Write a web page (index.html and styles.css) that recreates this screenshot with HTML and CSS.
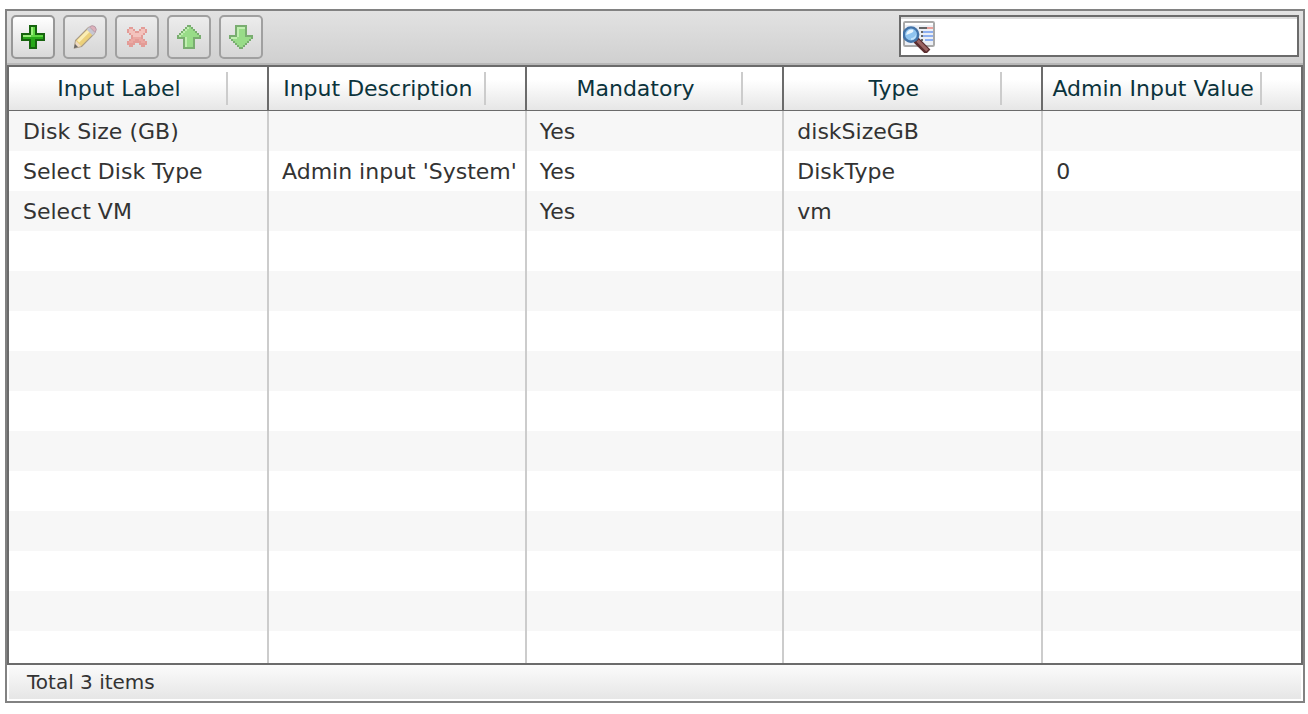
FILE: index.html
```html
<!DOCTYPE html>
<html lang="en">
<head>
<meta charset="utf-8">
<title>Inputs</title>
<link rel="stylesheet" href="styles.css">
</head>
<body>
<main class="panel">
  <div class="toolbar">
    <button class="tool" type="button" aria-label="Add">
      <svg class="icon" viewBox="0 0 12 12" shape-rendering="crispEdges">
        <path fill="#17640f" d="M4 0h4v4h4v4h-4v4h-4v-4h-4v-4h4z"/>
        <path fill="#27a818" d="M5 1h2v4h4v2h-4v4h-2v-4h-4v-2h4z"/>
        <path fill="#9bee7c" d="M5 1h1v4h-1zM1 5h4v1h-4z"/>
        <path fill="#5ed441" d="M6 1h1v4h-1zM7 5h4v1h-4zM5 5h2v1h-2z"/>
      </svg>
    </button>
    <button class="tool" type="button" aria-label="Edit" disabled>
      <svg class="icon" viewBox="0 0 12 12">
        <path fill="#ecd07a" stroke="#a89a86" stroke-width=".6" d="M1.300 7.700 7.700 1.300l3 3-6.400 6.400-3.600.8z"/>
        <path fill="#faedb5" d="m2 7.600 5.200-5.200 1.100 1.100-5.200 5.200z"/>
        <path fill="#c6c6d2" d="m6.800 2.200 1.200-1.200 3 3-1.200 1.200z"/>
        <path fill="#deb0ba" stroke="#b59aa6" stroke-width=".5" d="M8.200.9q1.400-1.100 2.800-.1 1.200 1.300.1 3z"/>
        <path fill="#eed9c2" d="m1.400 7.900 2.700 2.700-3 .7z"/>
        <path fill="#666" d="m1 9.500 1.500 1.500-2 .6z"/>
      </svg>
    </button>
    <button class="tool" type="button" aria-label="Delete" disabled>
      <svg class="icon" viewBox="0 0 12 12" shape-rendering="crispEdges">
        <path fill="#e39c97" d="M2 1h2v1h1v1h2v-1h1v-1h2v1h1v2h-1v1h-1v2h1v1h1v2h-1v1h-2v-1h-1v-1h-2v1h-1v1h-2v-1h-1v-2h1v-1h1v-2h-1v-1h-1v-2h1z"/>
        <path fill="#f3c3bd" d="M2 2h2v1h1v1h2v-1h1v-1h2v2h-1v1h-1v1h-4v-1h-1v-1h-1z"/>
        <path fill="#eba9a3" d="M4 6h4v1h1v1h1v1h-2v-1h-1v-1h-2v1h-1v1h-2v-1h1v-1h1z"/>
      </svg>
    </button>
    <button class="tool" type="button" aria-label="Move up" disabled>
      <svg class="icon" viewBox="0 0 12 12" shape-rendering="crispEdges">
        <path fill="#79ad70" d="M5 0h2v1h1v1h1v1h1v1h1v1h1v2h-3v5h-6v-5h-3v-2h1v-1h1v-1h1v-1h1v-1h1z"/>
        <path fill="#98dc88" d="M5 1h2v1h1v1h1v1h1v1h1v1h-3v5h-4v-5h-3v-1h1v-1h1v-1h1v-1h1z"/>
        <path fill="#c0efb0" d="M5 1h1v1h-1v1h-1v1h-1v1h-1v1h-1v-1h1v-1h1v-1h1v-1h1zM4 6h1v5h-1z"/>
      </svg>
    </button>
    <button class="tool" type="button" aria-label="Move down" disabled>
      <svg class="icon" viewBox="0 0 12 12" shape-rendering="crispEdges">
        <path fill="#79ad70" d="M3 0h6v5h3v2h-1v1h-1v1h-1v1h-1v1h-1v1h-2v-1h-1v-1h-1v-1h-1v-1h-1v-1h-1v-2h3z"/>
        <path fill="#98dc88" d="M4 1h4v5h3v1h-1v1h-1v1h-1v1h-1v1h-2v-1h-1v-1h-1v-1h-1v-1h-1v-1h3z"/>
        <path fill="#c0efb0" d="M4 1h4v1h-3v4h-1zM1 6h3v1h-3z"/>
      </svg>
    </button>
    <label class="search">
      <svg class="search-icon" viewBox="0 0 16 16">
        <rect x=".5" y=".5" width="15" height="12" rx=".6" fill="#eceff5" stroke="#a9a9a9"/>
        <path fill="#fff" d="M1 1h14v1h-14z"/>
        <path fill="#666" d="M8 3h4v1h-4zM9 5h1v1h-1zM9 7h1v1h-1zM9 9h1v1h-1z"/>
        <path fill="#e9a09b" d="M12 3h3v1h-3z"/>
        <path fill="#8eaff0" d="M10 5h5v1h-5zM10 7h5v1h-5zM11 9h4v1h-4z"/>
        <path stroke="#5b2d2f" stroke-width="3.400" d="m6.500 9.500 6 6"/>
        <path stroke="#9c6463" stroke-width="1.600" d="m7.300 9.800 4.900 4.900"/>
        <circle cx="4" cy="6.800" r="3.600" fill="#8fc4f0" stroke="#4373a8" stroke-width="1.200"/>
        <path fill="#e9f6ff" d="M1.600 7q0-2.800 3.200-2.800 1 .8-.4 1.700-1.600.6-2.800 1.100z"/>
        <path fill="#c4e4fb" d="M4 8.600q2-.2 2.400-2 .4 2.600-2.400 2.900z"/>
      </svg>
      <input class="search-input" type="text" aria-label="Search">
    </label>
  </div>
  <div class="grid">
    <table class="table">
      <colgroup><col class="col-first"><col><col><col class="col-type"><col></colgroup>
      <thead>
        <tr>
          <th><div class="head">Input Label</div></th>
          <th><div class="head">Input Description</div></th>
          <th><div class="head">Mandatory</div></th>
          <th><div class="head">Type</div></th>
          <th><div class="head">Admin Input Value</div></th>
        </tr>
      </thead>
      <tbody>
        <tr><td>Disk Size (GB)</td><td></td><td>Yes</td><td>diskSizeGB</td><td></td></tr>
        <tr><td>Select Disk Type</td><td>Admin input 'System'</td><td>Yes</td><td>DiskType</td><td>0</td></tr>
        <tr><td>Select VM</td><td></td><td>Yes</td><td>vm</td><td></td></tr>
        <tr><td></td><td></td><td></td><td></td><td></td></tr>
        <tr><td></td><td></td><td></td><td></td><td></td></tr>
        <tr><td></td><td></td><td></td><td></td><td></td></tr>
        <tr><td></td><td></td><td></td><td></td><td></td></tr>
        <tr><td></td><td></td><td></td><td></td><td></td></tr>
        <tr><td></td><td></td><td></td><td></td><td></td></tr>
        <tr><td></td><td></td><td></td><td></td><td></td></tr>
        <tr><td></td><td></td><td></td><td></td><td></td></tr>
        <tr><td></td><td></td><td></td><td></td><td></td></tr>
        <tr><td></td><td></td><td></td><td></td><td></td></tr>
        <tr class="row-cut"><td></td><td></td><td></td><td></td><td></td></tr>
      </tbody>
    </table>
  </div>
  <footer class="status">Total 3 items</footer>
</main>
</body>
</html>
```
FILE: styles.css
```css
* {
  box-sizing: border-box;
}

body {
  margin: 0;
  padding: 9px 3px 9px 5px;
  background: #fff;
  color: #333;
  font-family: Verdana, "DejaVu Sans", sans-serif;
  font-size: 22px;
}

.panel {
  border: 2px solid #828282;
  background: #fff;
}

.toolbar {
  display: flex;
  align-items: flex-start;
  gap: 8px;
  padding: 4px;
  height: 54px;
  border-bottom: 2px solid #b8b8b8;
  background: linear-gradient(#e2e2e2, #d0d0d0);
}

.tool {
  display: flex;
  align-items: center;
  justify-content: center;
  width: 44px;
  height: 44px;
  padding: 0;
  border: 2px solid #979797;
  border-radius: 5px;
  background: linear-gradient(#fff, #d9d9d9);
}

.tool:disabled {
  border-color: #a0a0a0;
  background: linear-gradient(#ececec, #d6d6d6);
}

.icon {
  width: 24px;
  height: 24px;
}

.search {
  display: flex;
  align-items: center;
  width: 400px;
  height: 42px;
  margin-left: auto;
  padding: 2px 0 0 2px;
  border: 2px solid #6b6b6b;
  background: #fff;
  box-shadow: inset 0 2px #dcdcdc;
}

.search-icon {
  flex: none;
  width: 32px;
  height: 32px;
}

.search-input {
  flex: 1;
  min-width: 0;
  border: 0;
  outline: 0;
  background: none;
  font: inherit;
  color: inherit;
}

.grid {
  border: 2px solid #6b6b6b;
}

.table {
  width: 100%;
  table-layout: fixed;
  border-collapse: separate;
  border-spacing: 0;
}

.col-first {
  width: 260px;
}

.col-type {
  width: 259px;
}

th {
  height: 44px;
  padding: 5px 39px 5px 0;
  border-right: 2px solid #6b6b6b;
  border-bottom: 1px solid #6b6b6b;
  background: linear-gradient(#fff 30%, #e6e6e6);
  color: #0b333c;
  font-weight: normal;
}

.head {
  padding: 1px 0 0 3px;
  border-right: 2px solid #ccc;
  line-height: 32px;
  white-space: nowrap;
}

td {
  height: 40px;
  padding: 1px 0 0 13px;
  border-right: 2px solid #ccc;
  line-height: 39px;
  white-space: nowrap;
}

td:first-child {
  padding-left: 14px;
}

th:last-child,
td:last-child {
  border-right: 0;
}

tbody tr:nth-child(odd) {
  background: #f7f7f7;
}

.row-cut td {
  height: 32px;
}

.status {
  margin: 0 2px 2px;
  padding-left: 18px;
  background: linear-gradient(#fbfbfb, #e6e6e6);
  font-size: 20px;
  line-height: 34px;
}
```
